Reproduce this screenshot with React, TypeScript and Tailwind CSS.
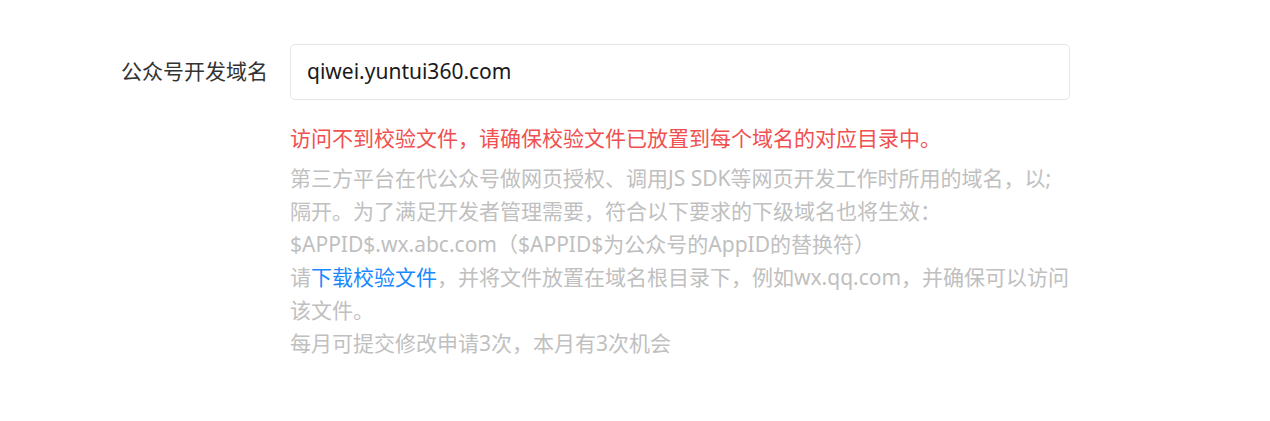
import React from "react";

const font = { fontFamily: '"Noto Sans", "Noto Sans CJK SC", sans-serif' };

export default function App() {
  return (
    <div className="w-full h-[421px] bg-white overflow-hidden" style={font}>
      <div className="pt-[44px] flex">
        <div className="w-[268px] h-[56px] flex items-center justify-end text-[21px] text-[#333]">
          公众号开发域名
        </div>
        <div className="ml-[22px] w-[780px]">
          <div className="h-[56px] border border-[#e6e6e6] rounded-[5px] flex items-center px-4 text-[21px] text-[#1a1a1a]">
            qiwei.yuntui360.com
          </div>
          <p className="mt-[22px] text-[21px] leading-[33px] text-[#f05050] whitespace-nowrap">
            访问不到校验文件，请确保校验文件已放置到每个域名的对应目录中。
          </p>
          <div className="mt-[7px] text-[21px] leading-[33px] text-[#c0c0c0] whitespace-nowrap">
            <div>第三方平台在代公众号做网页授权、调用JS SDK等网页开发工作时所用的域名，以;</div>
            <div>隔开。为了满足开发者管理需要，符合以下要求的下级域名也将生效：</div>
            <div>$APPID$.wx.abc.com（$APPID$为公众号的AppID的替换符）</div>
            <div>
              请<a className="text-[#1a88ff] cursor-pointer">下载校验文件</a>，并将文件放置在域名根目录下，例如wx.qq.com，并确保可以访问
            </div>
            <div>该文件。</div>
            <div>每月可提交修改申请3次，本月有3次机会</div>
          </div>
        </div>
      </div>
    </div>
  );
}
